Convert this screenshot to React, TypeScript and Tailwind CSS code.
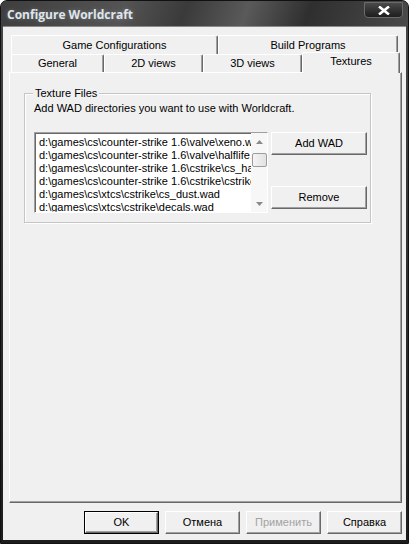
import React from "react";

const ui = "font-['Liberation_Sans',Arial,sans-serif] text-[11px] text-black";

const files = [
  "d:\\games\\cs\\counter-strike 1.6\\valve\\xeno.wad",
  "d:\\games\\cs\\counter-strike 1.6\\valve\\halflife.wad",
  "d:\\games\\cs\\counter-strike 1.6\\cstrike\\cs_havana.wad",
  "d:\\games\\cs\\counter-strike 1.6\\cstrike\\cstrike.wad",
  "d:\\games\\cs\\xtcs\\cstrike\\cs_dust.wad",
  "d:\\games\\cs\\xtcs\\cstrike\\decals.wad",
];

function Tab({ label, w, selected }: { label: string; w: string; selected?: boolean }) {
  return (
    <div
      className={`${w} flex items-center justify-center rounded-t-[2px] border-l border-t border-l-white border-t-white border-r border-r-[#696969] shadow-[inset_-1px_0_0_#a0a0a0] bg-[#f0f0f0] ${
        selected ? "h-[21px] -mt-[2px] -mb-[1px] pb-[3px] relative z-10" : "h-full"
      }`}
    >
      {label}
    </div>
  );
}

function Button({ label, w, disabled, isDefault }: { label: string; w: string; disabled?: boolean; isDefault?: boolean }) {
  return (
    <div className={`${w} h-[23px] ${isDefault ? "border border-black" : ""}`}>
      <div className="h-full flex items-center justify-center bg-[#f0f0f0] border-l border-t border-l-white border-t-white border-r border-b border-r-[#696969] border-b-[#696969] shadow-[inset_-1px_-1px_0_#a0a0a0]">
        <span className={disabled ? "text-[#a3a3a3]" : ""}>{label}</span>
      </div>
    </div>
  );
}

function Scrollbar() {
  return (
    <div className="w-[16px] h-full bg-[#f7f7f7] flex flex-col items-center">
      <div className="h-[17px] w-full flex items-center justify-center">
        <svg width="7" height="4" viewBox="0 0 7 4"><path d="M0 4 L3.5 0 L7 4 Z" fill="#8a8a8a" /></svg>
      </div>
      <div className="mt-[3px] h-[14px] w-[15px] rounded-[2px] border border-[#9c9c9c] bg-gradient-to-r from-[#f4f4f4] to-[#e2e2e2]" />
      <div className="flex-1" />
      <div className="h-[17px] w-full flex items-center justify-center">
        <svg width="7" height="4" viewBox="0 0 7 4"><path d="M0 0 L3.5 4 L7 0 Z" fill="#8a8a8a" /></svg>
      </div>
    </div>
  );
}

export default function App() {
  return (
    <div className="w-[409px] h-[544px] flex flex-col rounded-t-[7px] bg-gradient-to-b from-[#474747] via-[#303030] to-[#1d1d1d] border border-[#111]">
      {/* title bar */}
      <div className="h-[25px] flex items-start justify-between bg-[linear-gradient(110deg,#3e3e3e_0%,#545454_30%,#3a3a3a_45%,#5a5a5a_60%,#2f2f2f_75%,#4a4a4a_100%)] rounded-t-[6px]">
        <div className="pl-[6px] pt-[6px] font-['Open_Sans',sans-serif] font-bold text-[12px] leading-[16px] text-[#dfe6ee] [text-shadow:0_0_4px_rgba(255,255,255,0.25)]">
          Configure Worldcraft
        </div>
        <div className="mr-[5px] mt-[1px] w-[39px] h-[16px] rounded-b-[4px] border border-[#6a6a6a] bg-gradient-to-b from-[#4a4a4a] to-[#1e1e1e] flex items-center justify-center">
          <svg width="12" height="9" viewBox="0 0 12 9">
            <path d="M1 0.5 L11 8.5 M11 0.5 L1 8.5" stroke="#fff" strokeWidth="2.6" />
          </svg>
        </div>
      </div>

      {/* client */}
      <div className={`${ui} mx-[2px] mb-[3px] flex-1 bg-[#f0f0f0] border-t border-[#8a8a8a] flex flex-col`}>
        <div className="pl-[6px] pt-[8px]">
          <div className="w-[393px]">
            <div className="flex ml-[2px] h-[19px]">
              <Tab label="Game Configurations" w="w-[207px]" />
              <Tab label="Build Programs" w="w-[180px]" />
            </div>
            <div className="flex ml-[2px] h-[18px]">
              <Tab label="General" w="w-[93px]" />
              <Tab label="2D views" w="w-[99px]" />
              <Tab label="3D views" w="w-[99px]" />
              <Tab label="Textures" w="w-[98px]" selected />
            </div>
            <div className="h-[431px] border-l border-t border-l-white border-t-white border-r border-b border-r-[#696969] border-b-[#696969] shadow-[inset_-1px_-1px_0_#a0a0a0] pt-[20px] pl-[14px]">
              {/* group box */}
              <div className="relative w-[347px] h-[130px] border border-[#c5c5c5] shadow-[inset_1px_1px_0_#fff,1px_1px_0_#fff] pl-[9px] pt-[8px]">
                <div className="absolute -top-[7px] left-[8px] px-[2px] bg-[#f0f0f0] leading-[13px]">Texture Files</div>
                <div className="leading-[13px]">Add WAD directories you want to use with Worldcraft.</div>
                <div className="flex mt-[17px]">
                  <div className="w-[234px] h-[81px] flex border-l border-t border-l-[#a0a0a0] border-t-[#a0a0a0] border-r border-b border-r-white border-b-white shadow-[inset_1px_1px_0_#696969]">
                    <div className="flex-1 bg-white pl-[3px] pt-[2px] overflow-hidden ml-[1px] mt-[1px]">
                      {files.map((f) => (
                        <div key={f} className="h-[13px] leading-[13px] whitespace-nowrap">{f}</div>
                      ))}
                    </div>
                    <Scrollbar />
                  </div>
                  <div className="ml-[3px] flex flex-col">
                    <Button label="Add WAD" w="w-[96px]" />
                    <div className="h-[31px]" />
                    <Button label="Remove" w="w-[96px]" />
                  </div>
                </div>
              </div>
            </div>
          </div>
          <div className="flex justify-end gap-[6px] mt-[8px] w-[393px]">
            <Button label="OK" w="w-[75px]" isDefault />
            <Button label="Отмена" w="w-[75px]" />
            <Button label="Применить" w="w-[75px]" disabled />
            <Button label="Справка" w="w-[75px]" />
          </div>
        </div>
      </div>
    </div>
  );
}
